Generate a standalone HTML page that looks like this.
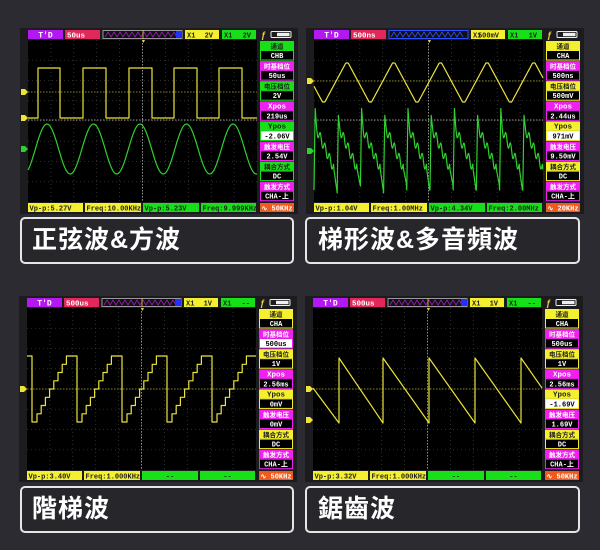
<!DOCTYPE html>
<html><head><meta charset="utf-8">
<style>
html,body{margin:0;padding:0}
body{width:600px;height:550px;background:#2b2b31;position:relative;overflow:hidden;font-family:"Liberation Sans","Noto Sans CJK TC",sans-serif}
.scr{position:absolute}
.lab{position:absolute;box-sizing:border-box;border:2px solid #e6e6e6;border-radius:5px;background:#26262b;color:#fff;font-weight:bold;font-size:25px;letter-spacing:1px;line-height:43px;font-family:"Liberation Sans","Noto Sans CJK TC",sans-serif}
</style></head><body>
<div id="s0" class="scr" style="left:20px;top:28px"></div>
<div id="s1" class="scr" style="left:306px;top:28px"></div>
<div id="s2" class="scr" style="left:19px;top:296px"></div>
<div id="s3" class="scr" style="left:305px;top:296px"></div>
<div class="lab" style="left:20px;top:217px;width:274px;height:47px;padding-left:10px">正弦波&amp;方波</div>
<div class="lab" style="left:305px;top:217px;width:275px;height:47px;padding-left:11px">梯形波&amp;多音頻波</div>
<div class="lab" style="left:20px;top:486px;width:274px;height:47px;padding-left:10px">階梯波</div>
<div class="lab" style="left:305px;top:486px;width:275px;height:47px;padding-left:11px">鋸齒波</div>
<script>
var Y='#ece43a',G='#2fd02f',M='#f020f0',GB='#18e018',YB='#f4f030';
function pts(a){return a.map(function(p){return p[0].toFixed(1)+','+p[1].toFixed(1)}).join(' ');}
function build(c){
 var s='<svg width="278" height="186" viewBox="-8 -2 278 186" xmlns:x="">';
 s+='<rect x="-8" y="-2" width="278" height="186" fill="#1c1c1e"/>';
 // top bar
 s+='<rect x="0" y="0" width="35" height="9" fill="#b418f0"/><text x="17.5" y="7.5" font-size="8" font-weight="bold" fill="#fff" text-anchor="middle" font-family="Liberation Mono">T\'D</text>';
 s+='<rect x="37" y="0" width="35" height="9" fill="#e0285a"/><text x="39" y="7.5" font-size="7.5" font-weight="bold" fill="#fff" font-family="Liberation Mono">'+c.h+'</text>';
 s+='<rect x="75" y="0.5" width="79" height="8" fill="#111" stroke="'+(c.blue?'#3050ff':'#999')+'"/>';
 var z=[];for(var i=0;i<=24;i++)z.push([77+i*3,i%2?2:7]);
 s+='<polyline points="'+pts(z)+'" fill="none" stroke="'+(c.blue?'#3050ff':'#a020c0')+'" stroke-width="0.8"/>';
 if(!c.blue)s+='<rect x="148" y="1" width="6" height="7" fill="#2030ff"/><line x1="115" y1="0" x2="115" y2="9" stroke="#ec4" stroke-width="0.8"/>';
 s+='<rect x="157" y="0" width="34" height="9" fill="'+YB+'"/><text x="159" y="7.5" font-size="7" font-weight="bold" fill="#222" font-family="Liberation Mono">X1</text><text x="185" y="7.5" font-size="7" font-weight="bold" fill="#222" text-anchor="end" font-family="Liberation Mono">'+c.x1+'</text>';
 s+='<rect x="194" y="0" width="34" height="9" fill="'+GB+'"/><text x="196" y="7.5" font-size="7" font-weight="bold" fill="#222" font-family="Liberation Mono">X1</text><text x="223" y="7.5" font-size="7" font-weight="bold" fill="#222" text-anchor="end" font-family="Liberation Mono">'+c.x2+'</text>';
 s+='<text x="233" y="8" font-size="9" font-weight="bold" fill="#ec4">ƒ</text>';
 s+='<rect x="243" y="1.5" width="20" height="6" fill="none" stroke="#eee" rx="1"/><rect x="249" y="2.8" width="12.5" height="3.4" fill="#eee"/>';
 // plot
 s+='<rect x="0" y="10" width="229" height="162" fill="#000"/>';
 for(i=1;i<10;i++)s+='<line x1="'+(i*22.9)+'" y1="10" x2="'+(i*22.9)+'" y2="172" stroke="#3c3c3c" stroke-width="0.8" stroke-dasharray="1,3"/>';
 for(i=1;i<8;i++)s+='<line x1="0" y1="'+(10+i*20.25)+'" x2="229" y2="'+(10+i*20.25)+'" stroke="#3c3c3c" stroke-width="0.8" stroke-dasharray="1,3"/>';
 s+='<line x1="114.5" y1="10" x2="114.5" y2="172" stroke="#999" stroke-width="0.9" stroke-dasharray="1.5,1.5"/>';
 s+='<line x1="0" y1="'+c.cy+'" x2="229" y2="'+c.cy+'" stroke="'+c.cyc+'" stroke-width="0.9" stroke-dasharray="1.5,1.5"/>';
 if(c.yl)s+='<line x1="0" y1="'+c.yl+'" x2="229" y2="'+c.yl+'" stroke="#8a8420" stroke-width="0.9" stroke-dasharray="1.5,1.5"/>';
 s+='<polygon points="114,10 117,10 115.5,13" fill="#ec4"/>';
 c.waves.forEach(function(w){s+='<polyline points="'+pts(w.p)+'" fill="none" stroke="'+w.c+'" stroke-width="1.2" stroke-linejoin="round"/>';});
 c.mk.forEach(function(m){s+='<polygon points="-7,'+(m[0]-3)+' -3,'+(m[0]-3)+' 0,'+m[0]+' -3,'+(m[0]+3)+' -7,'+(m[0]+3)+'" fill="'+m[1]+'"/>';});
 // right column
 var L=['通道','时基档位','电压档位','Xpos','Ypos','触发电压','耦合方式','触发方式'];
 for(i=0;i<8;i++){var y=11+i*20.1,col=i%2?M:c.rc,tc=i%2?'#fff':'#222';
  s+='<rect x="232" y="'+y+'" width="34" height="9" fill="'+col+'"/>';
  s+='<text x="249" y="'+(y+7.3)+'" font-size="'+(i==3||i==4?7.5:6.5)+'" font-weight="bold" fill="'+tc+'" text-anchor="middle" font-family="Liberation Mono,Noto Sans CJK SC">'+L[i]+'</text>';
  var wb=(i==c.wv);
  s+='<rect x="232.5" y="'+(y+9.5)+'" width="33" height="9.5" fill="'+(wb?'#fff':'#000')+'" stroke="'+col+'"/>';
  s+='<text x="249" y="'+(y+17)+'" font-size="7" font-weight="bold" fill="'+(wb?'#000':'#fff')+'" text-anchor="middle" font-family="Liberation Mono,Noto Sans CJK SC">'+c.rv[i]+'</text>';}
 // bottom bar
 var bb=[[0,55,YB],[57,56,YB],[115,56,GB],[173,55,GB]];
 for(i=0;i<4;i++){s+='<rect x="'+bb[i][0]+'" y="173" width="'+bb[i][1]+'" height="9" fill="'+bb[i][2]+'"/>';
  var t=c.bt[i];s+='<text x="'+(t=='--'?bb[i][0]+bb[i][1]/2:bb[i][0]+1.5)+'" y="180.5" font-size="7" font-weight="bold" fill="#222" font-family="Liberation Mono"'+(t=='--'?' text-anchor="middle"':'')+'>'+t+'</text>';}
 s+='<rect x="232" y="173" width="34" height="9" fill="#f05a1e"/><text x="249" y="180.5" font-size="7" font-weight="bold" fill="#fff" text-anchor="middle" font-family="Liberation Mono">'+c.fr+'</text>';
 return s+'</svg>';}
// waves
function sq(){var p=[[0,88]],r=[10,55,101,146,191],f=[32,78,124,169,214];for(var i=0;i<5;i++){p.push([r[i],88],[r[i],38],[f[i],38],[f[i],88]);}p.push([229,88]);return p;}
function sine(){var p=[];for(var x=0;x<=229;x++)p.push([x,119-25*Math.cos(2*Math.PI*(x-19)/46.5)]);return p;}
function tri(){var p=[];for(var x=0;x<=229;x+=0.5){var q=((x-33)/46.7)%1;if(q<0)q+=1;var v=1-4*Math.min(q,1-q);v=Math.max(-0.9,Math.min(0.9,v));p.push([x,52.5-21.7*v]);}return p;}
function noisy(){var p=[],per=23.2;for(var x=0;x<=229;x+=0.4){var k=Math.floor((x-0)/per),q=((x-0)/per)%1,y;var big=k%2==0;
 if(q<0.05)y=160-(160-(big?78:85))*(q/0.05);else if(q<0.12)y=(big?78:85)+(100-(big?78:85))*((q-0.05)/0.07);else if(q<0.85)y=100+38*((q-0.12)/0.73)+5*Math.sin(2*Math.PI*(q-0.12)*5);else y=138+(big?25:18)*((q-0.85)/0.15);p.push([x,y]);}return p;}
function stair(){var p=[[0,58],[5,58]];for(var d=5;d<229;d+=45){p.push([d,58],[d,124]);var x=d+5;p.push([x,124]);for(var k=1;k<=8;k++){var yy=124-k*8.25;p.push([x,yy+8.25]);p.push([x,yy]);x+=4.2;if(x>229)break;p.push([Math.min(x,229),yy]);}var e=Math.min(d+45,229);p.push([e,58]);}return p.filter(function(a){return a[0]<=229;});}
function saw(){var p=[[0,90]],r=[26,70,116,162,208];for(var i=0;i<5;i++)p.push([r[i],125],[r[i],60]);p.push([229,90]);return p;}
var cfg=[
{h:'50us',x1:'2V',x2:'2V',cy:90,cyc:'#999',yl:62,rc:GB,wv:4,
 rv:['CHB','50us','2V','219us','-2.06V','2.54V','DC','CHA-上'],bt:['Vp-p:5.27V','Freq:10.00KHz','Vp-p:5.23V','Freq:9.999KHz'],fr:'∿ 50KHz',
 waves:[{c:Y,p:sq()},{c:G,p:sine()}],mk:[[62,Y],[88,Y],[119,G]]},
{h:'500ns',x1:'500mV',x2:'1V',blue:1,cy:90,cyc:'#999',yl:51,rc:YB,wv:4,
 rv:['CHA','500ns','500mV','2.44us','971mV','9.50mV','DC','CHA-上'],bt:['Vp-p:1.04V','Freq:1.00MHz','Vp-p:4.34V','Freq:2.00MHz'],fr:'∿ 20KHz',
 waves:[{c:Y,p:tri()},{c:G,p:noisy()}],mk:[[51,Y],[121,G]]},
{h:'500us',x1:'1V',x2:'--',cy:91,cyc:'#8a8420',rc:YB,wv:1,
 rv:['CHA','500us','1V','2.56ms','0mV','0mV','DC','CHA-上'],bt:['Vp-p:3.40V','Freq:1.000KHz','--','--'],fr:'∿ 50KHz',
 waves:[{c:Y,p:stair()}],mk:[[91,Y]]},
{h:'500us',x1:'1V',x2:'--',cy:91,cyc:'#8a8420',rc:YB,wv:4,
 rv:['CHA','500us','1V','2.56ms','-1.69V','1.69V','DC','CHA-上'],bt:['Vp-p:3.32V','Freq:1.000KHz','--','--'],fr:'∿ 50KHz',
 waves:[{c:Y,p:saw()}],mk:[[91,Y],[122,Y]]}];
for(var i=0;i<4;i++)document.getElementById('s'+i).innerHTML=build(cfg[i]);
</script>
</body></html>
